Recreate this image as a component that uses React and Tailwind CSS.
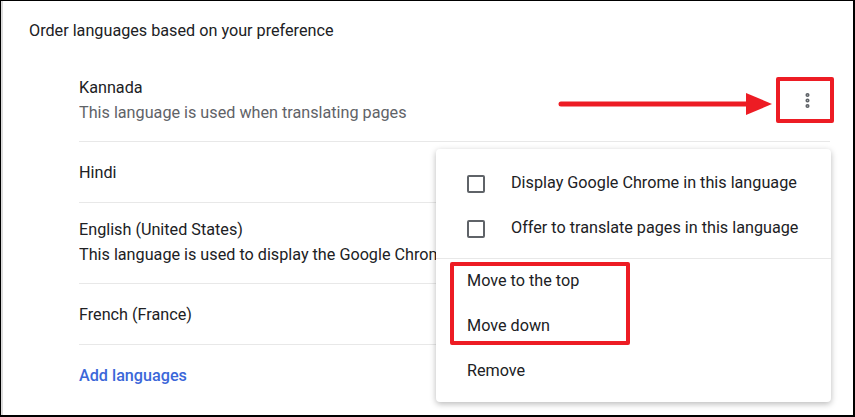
import { MoreVertical } from 'lucide-react'

const languages = [
  { name: 'Kannada', note: 'This language is used when translating pages', noteColor: 'text-[#5f6368]' },
  { name: 'Hindi' },
  { name: 'English (United States)', note: 'This language is used to display the Google Chrome UI', noteColor: 'text-[#202124]' },
  { name: 'French (France)' },
]

function Checkbox() {
  return <span className="block w-[18px] h-[18px] rounded-[2px] border-2 border-[#5f6368]" />
}

export default function App() {
  return (
    <div className="w-[855px] h-[417px] bg-white border-black border-t border-l border-r-2 border-b-2 font-['Roboto',sans-serif] text-[16.2px] text-[#202124] overflow-hidden">
      <div className="relative h-full border-l-2 border-[#dcdcdc] pl-[26px] pr-[23px] pt-[17px]">

        {/* Heading */}
        <div className="leading-[25px] mb-[18px]">Order languages based on your preference</div>

        {/* Language list */}
        <div className="ml-[50px]">
          {languages.map((lang, i) => (
            <div
              key={lang.name}
              className={`flex items-center justify-between ${i > 0 ? 'border-t border-[#e8e8e8]' : ''} ${lang.note ? 'pt-[14px] pb-[16px]' : 'h-[61px]'}`}
            >
              <div className="leading-[25px] whitespace-nowrap overflow-hidden">
                <div>{lang.name}</div>
                {lang.note && <div className={lang.noteColor}>{lang.note}</div>}
              </div>
              {i === 0 && (
                <div className="w-[36px] h-[36px] flex items-center justify-center mr-[5px] text-[#5f6368]">
                  <MoreVertical size={19} strokeWidth={3.2} />
                </div>
              )}
            </div>
          ))}
          <div className="border-t border-[#e8e8e8] h-[62px] pt-[1px] flex items-center">
            <span className="font-medium text-[#3b67d9]">Add languages</span>
          </div>
        </div>

        {/* Annotation arrow + box on the menu button */}
        <svg className="absolute left-[553px] top-[90px]" width="222" height="26" viewBox="0 0 222 26">
          <line x1="5" y1="13" x2="195" y2="13" stroke="#ed1c24" strokeWidth="5" strokeLinecap="round" />
          <polygon points="190,2 216,13 190,24" fill="#ed1c24" />
        </svg>
        <div className="absolute left-[773px] top-[76px] w-[58px] h-[46px] border-4 border-[#ed1c24] rounded-[2px]" />

        {/* Context menu */}
        <div className="absolute left-[433px] top-[148px] w-[395px] bg-white rounded-[4px] shadow-[0_2px_6px_rgba(0,0,0,0.28)] pt-[12px] pb-[8px] text-[#202124]">
          <div className="pb-[7px] border-b border-[#e8e8e8]">
            <div className="h-[45px] flex items-center pl-[31px] gap-[26px]">
              <Checkbox />
              <span>Display Google Chrome in this language</span>
            </div>
            <div className="h-[45px] flex items-center pl-[31px] gap-[26px]">
              <Checkbox />
              <span>Offer to translate pages in this language</span>
            </div>
          </div>
          <div className="h-[45px] flex items-center pl-[31px]">Move to the top</div>
          <div className="h-[45px] flex items-center pl-[31px]">Move down</div>
          <div className="h-[45px] flex items-center pl-[31px]">Remove</div>
        </div>
        <div className="absolute left-[447px] top-[261px] w-[180px] h-[83px] border-4 border-[#ed1c24] rounded-[2px]" />
      </div>
    </div>
  )
}
